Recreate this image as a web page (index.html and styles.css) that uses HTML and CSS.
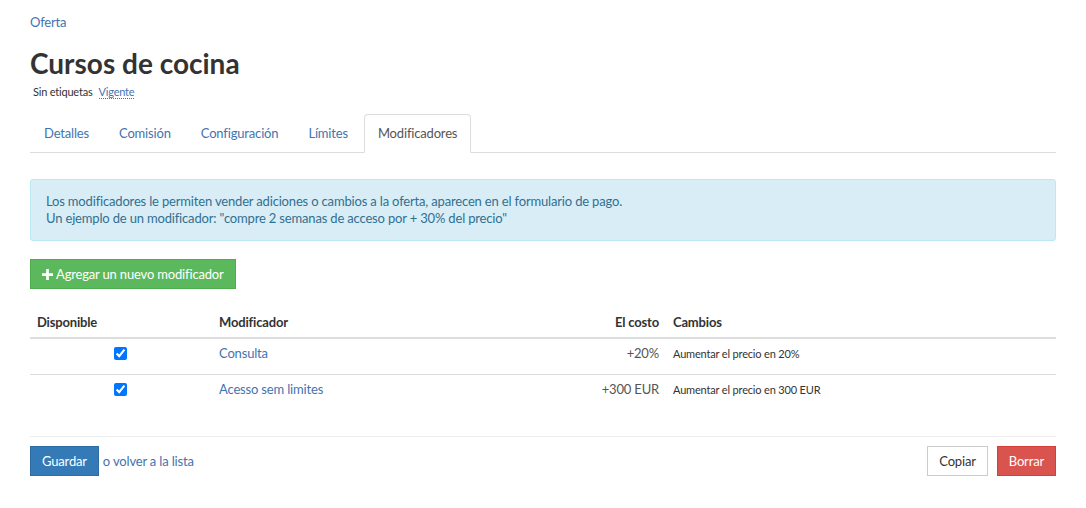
FILE: index.html
```html
<!DOCTYPE html>
<html lang="es">
<head>
<meta charset="utf-8">
<title>Cursos de cocina</title>
<link rel="stylesheet" href="styles.css">
</head>
<body>
<div class="page">
  <div class="crumb"><a href="#">Oferta</a></div>
  <h1 class="title">Cursos de cocina</h1>
  <div class="meta"><span class="tags">Sin etiquetas</span><a class="status" href="#">Vigente</a></div>

  <ul class="tabs">
    <li><a href="#">Detalles</a></li>
    <li><a href="#">Comisión</a></li>
    <li><a href="#">Configuración</a></li>
    <li><a href="#">Límites</a></li>
    <li class="active"><a href="#">Modificadores</a></li>
  </ul>

  <div class="alert">
    Los modificadores le permiten vender adiciones o cambios a la oferta, aparecen en el formulario de pago.<br>
    Un ejemplo de un modificador: "compre 2 semanas de acceso por + 30% del precio"
  </div>

  <div class="add-row">
    <a class="btn btn-success" href="#"><svg class="plus" viewBox="0 0 12 12" width="11" height="11"><path d="M4.5 0h3v4.5H12v3H7.5V12h-3V7.5H0v-3h4.5z" fill="#fff"/></svg>Agregar un nuevo modificador</a>
  </div>

  <table class="mods">
    <thead>
      <tr>
        <th class="c-avail">Disponible</th>
        <th class="c-name">Modificador</th>
        <th class="c-cost">El costo</th>
        <th class="c-changes">Cambios</th>
      </tr>
    </thead>
    <tbody>
      <tr>
        <td class="c-check"><input type="checkbox" checked></td>
        <td class="c-name"><a href="#">Consulta</a></td>
        <td class="c-cost">+20%</td>
        <td class="c-changes small">Aumentar el precio en 20%</td>
      </tr>
      <tr>
        <td class="c-check"><input type="checkbox" checked></td>
        <td class="c-name"><a href="#">Acesso sem limites</a></td>
        <td class="c-cost">+300 EUR</td>
        <td class="c-changes small">Aumentar el precio en 300 EUR</td>
      </tr>
    </tbody>
  </table>

  <div class="actions">
    <div class="left">
      <a class="btn btn-primary" href="#">Guardar</a>
      <span class="or">o <a href="#">volver a la lista</a></span>
    </div>
    <div class="right">
      <a class="btn btn-default" href="#">Copiar</a>
      <a class="btn btn-danger" href="#">Borrar</a>
    </div>
  </div>
</div>
</body>
</html>
```

FILE: styles.css
```css
* { box-sizing: border-box; }
body {
  margin: 0;
  font-family: "Lato", "Liberation Sans", sans-serif;
  font-size: 13px;
  line-height: 17px;
  letter-spacing: -0.17px;
  color: #333;
  background: #fff;
}
a { color: #3f74b0; text-decoration: none; }
.page { padding: 14px 30px 30px 30px; }

.crumb { height: 17px; }

.title {
  margin: 16px 0 0 0;
  font-size: 28px;
  line-height: 32px;
  font-weight: 700;
  letter-spacing: 0;
  color: #333;
}
.meta { margin-top: 6px; font-size: 11px; line-height: 14px; padding-left: 3px; letter-spacing: -0.2px; }
.tags { color: #333; margin-right: 6px; }
.status { border-bottom: 1px dotted #3f74b0; }

.tabs {
  list-style: none;
  margin: 15px 0 0 0;
  padding: 0;
  display: flex;
  border-bottom: 1px solid #ddd;
}
.tabs li { margin-right: 2px; margin-bottom: -1px; }
.tabs a {
  display: block;
  padding: 10px 13px;
  border: 1px solid transparent;
  border-radius: 4px 4px 0 0;
  line-height: 17px;
}
.tabs .active a {
  color: #555;
  background: #fff;
  border-color: #ddd;
  border-bottom-color: transparent;
}

.alert {
  margin-top: 26px;
  padding: 13px 15px 13px 15px;
  background: #d9edf7;
  border: 1px solid #bce8f1;
  border-radius: 3px;
  color: #31708f;
  line-height: 17px;
}

.add-row { margin-top: 18px; }
.btn {
  display: inline-block;
  padding: 6px 11px 5px 11px;
  font-size: 13px;
  line-height: 17px;
  border: 1px solid transparent;
  border-radius: 0;
  white-space: nowrap;
}
.btn-success { background: #5cb85c; border-color: #4cae4c; color: #fff; }
.btn-primary { background: #337ab7; border-color: #2e6da4; color: #fff; }
.btn-danger { background: #d9534f; border-color: #d43f3a; color: #fff; }
.btn-default { background: #fff; border-color: #ccc; color: #333; }
.plus { margin-right: 3px; vertical-align: -1px; }

.mods {
  width: 100%;
  margin-top: 17px;
  border-collapse: collapse;
}
.mods th, .mods td {
  padding: 6px 7px 10px 7px;
  text-align: left;
  line-height: 17px;
  vertical-align: top;
}
.mods th { font-weight: 700; padding-top: 8px; padding-bottom: 6px; border-bottom: 2px solid #ddd; }
.mods tbody tr:first-child td { border-bottom: 1px solid #ddd; }
.c-avail { width: 181px; }
.mods .c-check { text-align: center; }
.c-check input { margin: 2px 0 0 0; width: 13px; height: 13px; }
.mods .c-name { width: 370px; padding-left: 8px; }
.mods .c-cost { text-align: right; width: 86px; color: #555; padding-right: 8px; }
.mods th.c-cost { color: #333; }
.mods .c-changes { padding-left: 6px; }
.mods .small { font-size: 11px; }

.actions {
  margin-top: 26px;
  border-top: 1px solid #eee;
  padding-top: 9px;
  display: flex;
  justify-content: space-between;
  align-items: center;
}
.left { display: flex; align-items: center; gap: 4px; }
.or { color: #3f74b0; }
.right { display: flex; gap: 9px; }
```
